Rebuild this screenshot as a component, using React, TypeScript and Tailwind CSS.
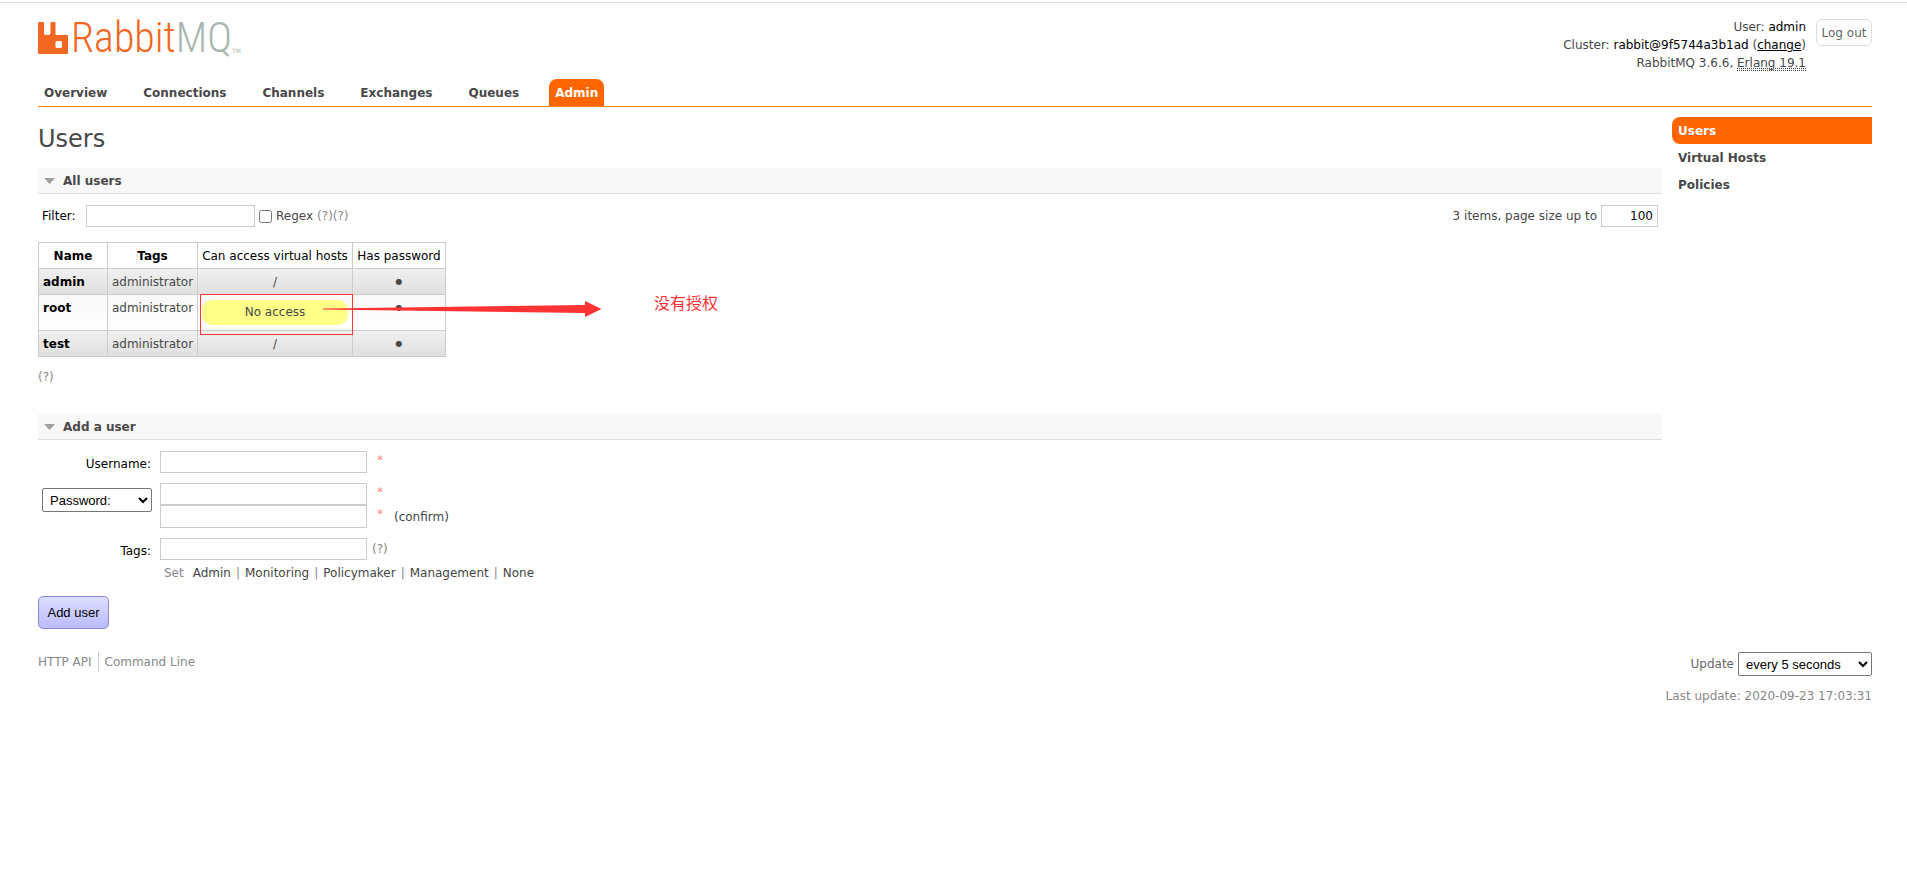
import { useState } from 'react'
import type { ReactNode } from 'react'

const tabs = ['Overview', 'Connections', 'Channels', 'Exchanges', 'Queues', 'Admin']
const sideLinks = ['Users', 'Virtual Hosts', 'Policies']
const tagPresets = ['Admin', 'Monitoring', 'Policymaker', 'Management', 'None']

const users = [
  { name: 'admin', tags: 'administrator', vhosts: '/' },
  { name: 'root', tags: 'administrator', vhosts: null },
  { name: 'test', tags: 'administrator', vhosts: '/' },
]

const field = 'h-[22px] border border-[#ccc] bg-white px-1 text-black'

function Logo() {
  return (
    <a href="#/" aria-label="RabbitMQ" className="flex h-9 items-end">
      <svg width="30" height="32" viewBox="0 0 30 32" className="mb-0.5">
        <path
          fill="#f26822"
          fillRule="evenodd"
          d="M1 0h4q1 0 1 1v10q0 2 2 2h2.500q2 0 2-2V1q0-1 1-1h3q1 0 1 1v11q0 1 1 1H29q1 0 1 1V31q0 1-1 1H1q-1 0-1-1V1q0-1 1-1zM19 19q-1.500 0-1.500 1.500v4q0 1.500 1.500 1.500h3.500q1.500 0 1.500-1.500v-4q0-1.500-1.500-1.500z"
        />
      </svg>
      <span className="ml-[3px] font-['Roboto_Condensed','Liberation_Sans_Narrow',sans-serif] text-[42px] leading-[36px] font-light text-[#f26822]">
        Rabbit<span className="text-[#a9b6b0]">MQ</span>
      </span>
      <span className="text-[6px] leading-[10px] text-[#a9b6b0]">TM</span>
    </a>
  )
}

function Header() {
  return (
    <header className="flex justify-between">
      <div className="pt-[17px]">
        <Logo />
      </div>
      <div className="flex gap-2.5 pt-[15px]">
        <ul className="text-right leading-[18px]">
          <li>
            User: <span className="text-black">admin</span>
          </li>
          <li>
            Cluster: <span className="text-black">rabbit@9f5744a3b1ad</span> (
            <a href="#/cluster-name" className="text-black underline">
              change
            </a>
            )
          </li>
          <li>
            RabbitMQ 3.6.6,{' '}
            <abbr title="Erlang/OTP 19" className="border-b border-dotted border-[#444] underline decoration-dotted">
              Erlang 19.1
            </abbr>
          </li>
        </ul>
        <button className="mt-px h-[27px] w-14 rounded-md border border-[#ddd] whitespace-nowrap text-[#666]">
          Log out
        </button>
      </div>
    </header>
  )
}

function Help() {
  return (
    <a href="#/help" className="text-[#888]">
      (?)
    </a>
  )
}

function SectionTitle({ children }: { children: ReactNode }) {
  return (
    <h2 className="flex h-[26px] items-center gap-2 border-b border-[#ddd] bg-[#f8f8f8] pl-1.5 font-bold">
      <svg width="11" height="6" viewBox="0 0 11 6">
        <path d="M0 0h11L5.500 6z" fill="#a0a0a0" />
      </svg>
      {children}
    </h2>
  )
}

function UsersTable() {
  return (
    <div className="relative mt-[15px] w-fit">
      <table className="w-[408px] table-fixed border-collapse text-center">
        <colgroup>
          <col className="w-[69px]" />
          <col className="w-[90px]" />
          <col className="w-[155px]" />
          <col className="w-[93px]" />
        </colgroup>
        <thead>
          <tr className="h-[26px] text-black [&>th]:border [&>th]:border-[#ccc]">
            <th className="font-bold">Name</th>
            <th className="font-bold">Tags</th>
            <th className="font-normal whitespace-nowrap">Can access virtual hosts</th>
            <th className="font-normal whitespace-nowrap">Has password</th>
          </tr>
        </thead>
        <tbody>
          {users.map((user, i) => (
            <tr
              key={user.name}
              className={`align-top bg-gradient-to-b [&>td]:border [&>td]:border-[#ccc] [&>td]:pt-[5px] [&>td]:pb-1 ${
                i % 2 === 0 ? 'h-[26px] from-[#f0f0f0] to-[#dfdfdf]' : 'h-9 from-[#f8f8f8] to-white'
              }`}
            >
              <td className="px-1 text-left font-bold">
                <a href="#/users" className="text-black">
                  {user.name}
                </a>
              </td>
              <td>{user.tags}</td>
              <td className="px-1">
                {user.vhosts ?? <p className="rounded-[10px] bg-[#ff8] leading-[25px]">No access</p>}
              </td>
              <td className="text-[8px] leading-4">●</td>
            </tr>
          ))}
        </tbody>
      </table>

      {/* callout on the user without access */}
      <div className="absolute top-[52px] left-[162px] h-[41px] w-[153px] border border-[#f33]" />
      <svg className="absolute top-[58px] left-[285px]" width="279" height="18" viewBox="0 0 279 18">
        <path d="M0 8.500L262 5V1l16.500 8L262 17v-4L0 9.500z" fill="#f33" />
      </svg>
      <p className="absolute top-12 left-[616px] font-['Noto_Sans_CJK_SC',sans-serif] text-base leading-6 whitespace-nowrap text-[#f33]">
        没有授权
      </p>
    </div>
  )
}

function Required() {
  return <span className="ml-2.5 self-start leading-[18px] text-[#f88]">*</span>
}

function AddUserForm() {
  return (
    <form onSubmit={(e) => e.preventDefault()}>
      <div className="mt-[11px] grid grid-cols-[113px_1fr] gap-x-[9px] gap-y-2.5 text-black">
        <label htmlFor="username" className="pt-[5px] text-right">
          Username:
        </label>
        <div className="flex items-center">
          <input id="username" className={`${field} w-[207px]`} />
          <Required />
        </div>

        <div className="pt-[5px] pl-1">
          <select
            aria-label="Password type"
            className="h-6 w-[110px] rounded-xs border border-[#767676] bg-white px-[3px] font-['Liberation_Sans',sans-serif] text-[13px]"
          >
            <option>Password:</option>
            <option>No password</option>
          </select>
        </div>
        <div className="text-[#444]">
          <div className="flex items-center">
            <input type="password" aria-label="Password" className={`${field} w-[207px]`} />
            <Required />
          </div>
          <div className="flex items-center">
            <input type="password" id="confirm" className={`${field} h-[23px] w-[207px]`} />
            <Required />
            <label htmlFor="confirm" className="ml-[11px]">
              (confirm)
            </label>
          </div>
        </div>

        <label htmlFor="tags" className="pt-[5px] text-right">
          Tags:
        </label>
        <div>
          <div className="flex items-center gap-[5px]">
            <input id="tags" className={`${field} w-[207px]`} />
            <Help />
          </div>
          <p className="mt-[5px] flex gap-[5px] pl-1 text-[#888]">
            <span className="mr-1">Set</span>
            {tagPresets.map((tag, i) => (
              <span key={tag} className="flex gap-[5px]">
                {i > 0 && <span>|</span>}
                <a href="#/tags" className="text-[#444]">
                  {tag}
                </a>
              </span>
            ))}
          </p>
        </div>
      </div>
      <button className="mt-[15px] h-[33px] w-[71px] rounded-[5px] border border-[#88d] bg-gradient-to-b from-[#ddf] to-[#bbf] font-['Liberation_Sans',sans-serif] text-[13px] text-black">
        Add user
      </button>
    </form>
  )
}

export default function App() {
  const [regex, setRegex] = useState(false)

  return (
    <div className="pt-0.5 font-['DejaVu_Sans',sans-serif] text-xs text-[#484848]">
      <div className="border-t border-[#ddd] pr-[35px] pl-[38px]">
        <Header />

        <nav className="mt-[7px] border-b border-[#f80]">
          <ul className="flex gap-6">
            {tabs.map((tab) => (
              <li key={tab}>
                <a
                  href="#/"
                  className={`block rounded-t-lg px-1.5 pt-px font-bold leading-[26px] ${
                    tab === 'Admin' ? 'bg-[#f60] text-white' : ''
                  }`}
                >
                  {tab}
                </a>
              </li>
            ))}
          </ul>
        </nav>

        <div className="flex gap-2.5">
          <main className="min-w-0 flex-1">
            <h1 className="mt-4 text-2xl leading-8">Users</h1>

            <section className="mt-[13px]">
              <SectionTitle>All users</SectionTitle>
              <div className="mt-[11px] flex items-center justify-between px-1">
                <div className="flex items-center">
                  <label htmlFor="filter" className="w-11 text-black">
                    Filter:
                  </label>
                  <input id="filter" className={`${field} w-[169px]`} />
                  <input
                    id="regex"
                    type="checkbox"
                    checked={regex}
                    onChange={(e) => setRegex(e.target.checked)}
                    className="ml-1 size-[13px]"
                  />
                  <label htmlFor="regex" className="mr-1 ml-1">
                    Regex
                  </label>
                  <Help />
                  <Help />
                </div>
                <div className="flex items-center gap-1">
                  <label htmlFor="pagesize">3 items, page size up to</label>
                  <input id="pagesize" defaultValue="100" className={`${field} w-[57px] text-right`} />
                </div>
              </div>
              <UsersTable />
              <p className="mt-3">
                <Help />
              </p>
            </section>

            <section className="mt-[29px]">
              <SectionTitle>Add a user</SectionTitle>
              <AddUserForm />
            </section>
          </main>

          <aside className="w-[200px] shrink-0 pt-2.5">
            <ul>
              {sideLinks.map((link) => (
                <li key={link}>
                  <a
                    href="#/"
                    className={`block rounded-l-lg px-1.5 pt-px font-bold leading-[26px] ${
                      link === 'Users' ? 'bg-[#f60] text-white' : ''
                    }`}
                  >
                    {link}
                  </a>
                </li>
              ))}
            </ul>
          </aside>
        </div>

        <footer className="mt-[23px] flex items-start justify-between text-[#888]">
          <div className="flex leading-5">
            <a href="#/api" className="border-r border-[#ccc] pr-1.5">
              HTTP API
            </a>
            <a href="#/cli" className="pl-1.5">
              Command Line
            </a>
          </div>
          <div className="text-right">
            <div className="flex items-center justify-end gap-1">
              <label htmlFor="update" className="text-[#666]">
                Update
              </label>
              <select
                id="update"
                className="h-6 w-[134px] rounded-xs border border-[#767676] bg-white px-[3px] font-['Liberation_Sans',sans-serif] text-[13px] text-black"
              >
                <option>every 5 seconds</option>
                <option>every 30 seconds</option>
              </select>
            </div>
            <p className="mt-3">Last update: 2020-09-23 17:03:31</p>
          </div>
        </footer>
      </div>
    </div>
  )
}
